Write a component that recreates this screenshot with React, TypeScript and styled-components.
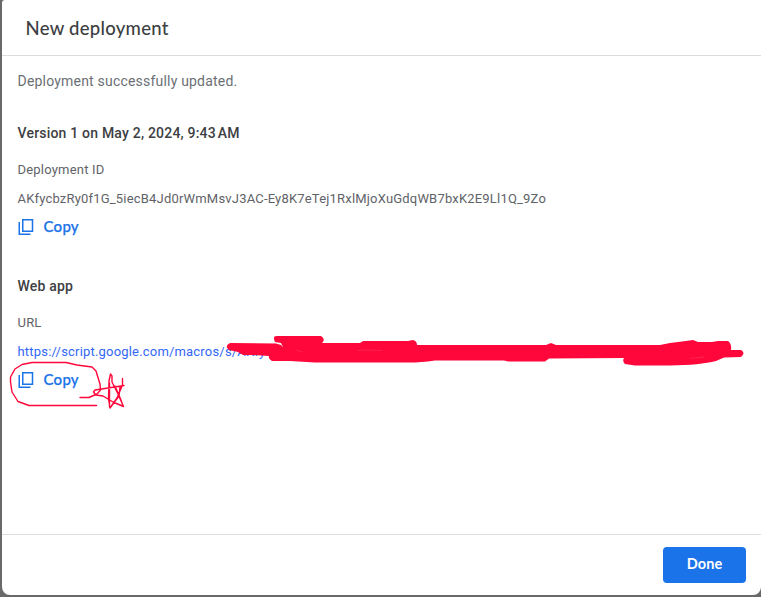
import React from "react";
import styled, { createGlobalStyle } from "styled-components";

const GlobalStyle = createGlobalStyle`
  * { box-sizing: border-box; }
  body { margin: 0; background: #666; overflow: hidden; }
`;

const Backdrop = styled.div`
  height: 597px;
  padding: 0 0 2px 2px;
  background: #69696a;
`;

const Dialog = styled.section`
  display: flex;
  flex-direction: column;
  height: 595px;
  background: #fff;
  border-radius: 3px 0 8px 8px;
  font-family: Roboto, sans-serif;
  color: #5f6368;
`;

const Header = styled.header`
  height: 56px;
  padding: 0 23.5px;
  border-bottom: 1px solid #dadce0;
`;

const Title = styled.h1`
  margin: 0;
  font: 500 18.5px/57px Lato, sans-serif;
  letter-spacing: 0.28px;
  color: #3c4043;
`;

const Content = styled.main`
  flex: 1;
  padding: 15px 15.5px 0;
`;

const Status = styled.p`
  margin: 0 0 32px;
  font-size: 14px;
  line-height: 20px;
  letter-spacing: 0.2px;
  color: #6b6f74;
`;

const Section = styled.section`
  height: 153px;
`;

const Heading = styled.h2`
  margin: 0 0 18px;
  font-size: 14px;
  font-weight: 500;
  line-height: 20px;
  letter-spacing: 0.2px;
  color: #3c4043;
`;

const Label = styled.div`
  height: 29px;
  font-size: 13px;
  line-height: 18px;
  letter-spacing: 0.2px;
`;

const Value = styled.div<{ $link?: boolean }>`
  height: 18px;
  font-size: 13px;
  line-height: 18px;
  letter-spacing: 0.19px;
  white-space: nowrap;
  color: ${(p) => (p.$link ? "#3367f6" : "#5f6368")};
`;

const CopyButton = styled.button`
  display: flex;
  align-items: center;
  gap: 9px;
  height: 20px;
  margin-top: 9px;
  padding: 0;
  border: 0;
  background: none;
  color: #1a73e8;
  font: 500 15px/18px Lato, sans-serif;
  letter-spacing: 0.25px;
  -webkit-text-stroke: 0.25px #1a73e8;
`;

const CopyText = styled.span`
  padding-bottom: 3px;
`;

const Footer = styled.footer`
  display: flex;
  justify-content: flex-end;
  height: 61px;
  padding: 12px 15px;
  border-top: 1px solid #dadce0;
`;

const DoneButton = styled.button`
  width: 83px;
  height: 36px;
  padding: 0 0 2px;
  border: 0;
  border-radius: 4px;
  background: #1a73e8;
  color: #fff;
  font: 700 14.5px/34px Lato, sans-serif;
  letter-spacing: 0.1px;
`;

const Ink = styled.svg`
  position: absolute;
  top: 0;
  left: 0;
  pointer-events: none;
`;

const CopyIcon = () => (
  <svg width="17" height="18" viewBox="0 0 17 18" fill="none" stroke="currentColor" strokeWidth="1.5">
    <path d="M4.75 1.75H14.5V13.25H4.75Z" />
    <path d="M1.25 4V16.25H12.5" />
  </svg>
);

const Copy = () => (
  <CopyButton>
    <CopyIcon />
    <CopyText>Copy</CopyText>
  </CopyButton>
);

const Annotations = () => (
  <Ink width="761" height="597" viewBox="0 0 761 597" fill="none" strokeLinecap="round" strokeLinejoin="round">
    <path
      fill="#ff073a"
      d="M230 343 L276 343.500 L281 345 L283 347 L281 343 L275 342 Q272 336 277 336 H321 Q326 339 322 343 H360 L363 341 L408 341 L413 340 Q417 341 417 345 L546 345 L551 343 L556 345 L660 345 L670 343 L682 341.500 L693 340 L698 342 L712 342 L718 341 H728 Q732 344 731 350 H741 Q746 353 741 357 L724 357.500 L716 361 Q700 365 670 365.500 L635 365.500 L625 364 Q622 361 624 358 L549 358.500 L545 361.500 L508 361.500 L504 360.500 L435 360.500 L428 361.500 L415 362.500 H315 L290 361 L272 361 Q268 359 269 356 L252 355 L243 355 L238 352 L229 350 Q224 346 230 343Z"
    />
    <path stroke="#ff3c68" strokeWidth="0.5" d="M358 350.500L365 350L382 350.500M297 350.500L302 351.500M690 358.500L704 357" />
    <g stroke="#ff073a" strokeWidth="1.4">
      <path d="M96.500 405.500H29L18 401.500L12 392L10.500 382V377L15 369L22 364.500L32 362.500H66L77 365L92 367L96 371L100 384L100.500 390L97 394L89 397.500L80 397.500" />
      <path d="M122.500 378.500V385L117 398L110 408L108.500 399L109 381L110.500 374L112 376L112 382L118 394L123.500 406.500L113 402L103 396L96 395L93.500 392L95 390L105 388.500L124 385.500M109.500 383L109.500 407M115 386L121 400L123 406M120 387L119 396L110 408" />
    </g>
  </Ink>
);

export default function App() {
  return (
    <>
      <GlobalStyle />
      <Backdrop>
        <Dialog>
          <Header>
            <Title>New deployment</Title>
          </Header>
          <Content>
            <Status>Deployment successfully updated.</Status>
            <Section>
              <Heading>Version 1 on May 2, 2024, 9:43&#8239;AM</Heading>
              <Label>Deployment ID</Label>
              <Value>AKfycbzRy0f1G_5iecB4Jd0rWmMsvJ3AC-Ey8K7eTej1RxlMjoXuGdqWB7bxK2E9Ll1Q_9Zo</Value>
              <Copy />
            </Section>
            <Section>
              <Heading>Web app</Heading>
              <Label>URL</Label>
              <Value $link>https://script.google.com/macros/s/AKfy</Value>
              <Copy />
            </Section>
          </Content>
          <Footer>
            <DoneButton>Done</DoneButton>
          </Footer>
        </Dialog>
      </Backdrop>
      <Annotations />
    </>
  );
}
